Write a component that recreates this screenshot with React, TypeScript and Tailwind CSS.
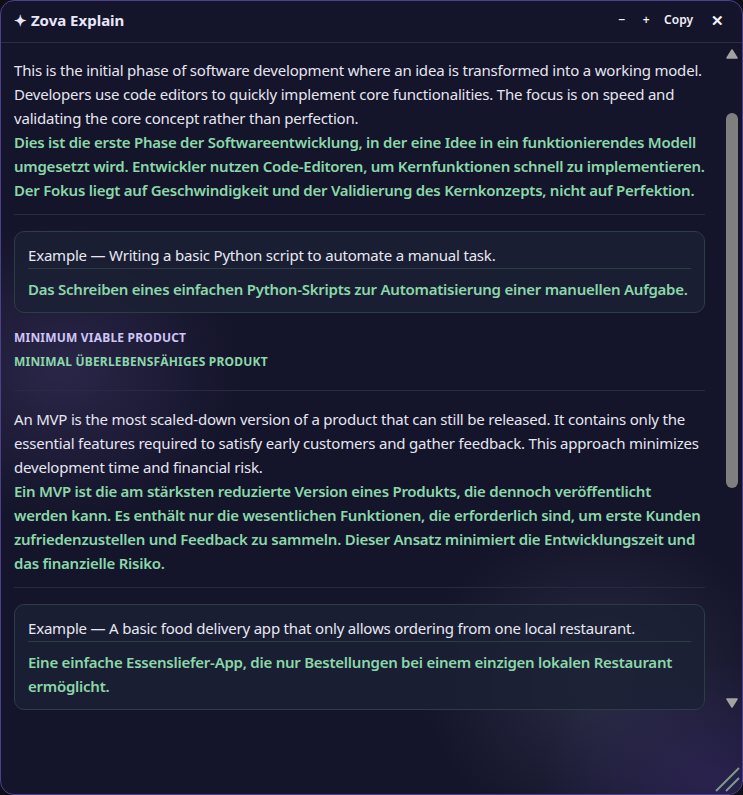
import React from "react";

const font = { fontFamily: '"Segoe UI", "Noto Sans", "Open Sans", sans-serif' };

function Divider({ className = "my-[12px]" }: { className?: string }) {
  return <div className={"h-px bg-[#2a2940] " + className} />;
}

function ExampleCard({ en, de }: { en: string; de: string }) {
  return (
    <div className="rounded-[10px] border border-[#2c3d44] bg-[#1c2134]/80 px-[13px] pt-[11px] pb-[11px]">
      <div className="text-[15px] leading-[24px] tracking-[-0.2px] text-[#e8e8f2] pb-[1px] border-b border-[#2c3d44]">{en}</div>
      <div className="text-[15px] leading-[24px] tracking-[-0.25px] font-semibold text-[#8ad8a9] mt-[8px]">{de}</div>
    </div>
  );
}

export default function App() {
  return (
    <div className="w-[743px] h-[795px] bg-[#0e0e14] overflow-hidden" style={font}>
      <div className="relative w-full h-full rounded-[14px] border border-[#4c3f8e] bg-[#14142a] overflow-hidden flex flex-col">
        {/* glows */}
        <div className="pointer-events-none absolute left-[-120px] top-[220px] w-[360px] h-[300px] rounded-full bg-[radial-gradient(closest-side,rgba(70,60,110,0.45),rgba(20,20,42,0))]" />
        <div className="pointer-events-none absolute left-[420px] top-[520px] w-[360px] h-[320px] rounded-full bg-[radial-gradient(closest-side,rgba(60,64,90,0.55),rgba(20,20,42,0))]" />
        <div className="pointer-events-none absolute left-[540px] top-[660px] w-[340px] h-[240px] rounded-full bg-[radial-gradient(closest-side,rgba(55,42,100,0.6),rgba(20,20,42,0))]" />

        {/* header */}
        <div className="relative h-[42px] shrink-0 flex items-center justify-between pl-[13px] pr-[18px] pb-[3px] border-b border-[#2e2c46]">
          <div className="text-[15px] font-bold text-[#e9e6fa]">✦ Zova Explain</div>
          <div className="flex items-center text-[12px] text-[#f2f2f8] font-semibold">
            <span className="w-[10px] text-center">−</span>
            <span className="w-[10px] text-center ml-[14px]">+</span>
            <span className="ml-[13px]">Copy</span>
            <span className="ml-[18px] text-[15px] font-bold">✕</span>
          </div>
        </div>

        {/* body */}
        <div className="relative flex-1 flex min-h-0">
          <div className="flex-1 pl-[13px] pr-[18px] pt-[15px]">
            <div className="text-[15px] leading-[24px] tracking-[-0.2px] text-[#e6e6f0]">
              This is the initial phase of software development where an idea is transformed into a working model. Developers use code editors to quickly implement core functionalities. The focus is on speed and validating the core concept rather than perfection.
            </div>
            <div className="text-[15px] leading-[24px] tracking-[-0.25px] font-semibold text-[#8ad8a9]">
              Dies ist die erste Phase der Softwareentwicklung, in der eine Idee in ein funktionierendes Modell umgesetzt wird. Entwickler nutzen Code-Editoren, um Kernfunktionen schnell zu implementieren. Der Fokus liegt auf Geschwindigkeit und der Validierung des Kernkonzepts, nicht auf Perfektion.
            </div>
            <Divider />
            <div className="mt-[16px]">
              <ExampleCard
                en="Example — Writing a basic Python script to automate a manual task."
                de="Das Schreiben eines einfachen Python-Skripts zur Automatisierung einer manuellen Aufgabe."
              />
            </div>
            <div className="mt-[13px] text-[12px] leading-[24px] font-bold tracking-[0.2px] text-[#cfc6f6]">MINIMUM VIABLE PRODUCT</div>
            <div className="text-[12px] leading-[24px] font-bold tracking-[0.2px] text-[#8ad8a9]">MINIMAL ÜBERLEBENSFÄHIGES PRODUKT</div>
            <Divider className="mt-[16px] mb-[16px]" />
            <div className="text-[15px] leading-[24px] tracking-[-0.2px] text-[#e6e6f0]">
              An MVP is the most scaled-down version of a product that can still be released. It contains only the essential features required to satisfy early customers and gather feedback. This approach minimizes development time and financial risk.
            </div>
            <div className="text-[15px] leading-[24px] tracking-[-0.25px] font-semibold text-[#8ad8a9]">
              Ein MVP ist die am stärksten reduzierte Version eines Produkts, die dennoch veröffentlicht werden kann. Es enthält nur die wesentlichen Funktionen, die erforderlich sind, um erste Kunden zufriedenzustellen und Feedback zu sammeln. Dieser Ansatz minimiert die Entwicklungszeit und das finanzielle Risiko.
            </div>
            <Divider />
            <div className="mt-[16px]">
              <ExampleCard
                en="Example — A basic food delivery app that only allows ordering from one local restaurant."
                de="Eine einfache Essensliefer-App, die nur Bestellungen bei einem einzigen lokalen Restaurant ermöglicht."
              />
            </div>
          </div>

          {/* scrollbar */}
          <div className="w-[17px] mr-[2px] shrink-0 flex flex-col items-center pt-[6px] pb-[86px]">
            <svg width="12" height="10" viewBox="0 0 12 10" className="shrink-0">
              <path d="M6 1 L11 9 L1 9 Z" fill="#a3a3a3" stroke="#a3a3a3" strokeLinejoin="round" strokeWidth="1.5" />
            </svg>
            <div className="flex-1 w-full flex flex-col items-center">
              <div className="h-[54px]" />
              <div className="w-[12px] h-[375px] rounded-full bg-[#7f7f7f]" />
            </div>
            <svg width="12" height="10" viewBox="0 0 12 10" className="shrink-0">
              <path d="M1 1 L11 1 L6 9 Z" fill="#a3a3a3" stroke="#a3a3a3" strokeLinejoin="round" strokeWidth="1.5" />
            </svg>
          </div>

          {/* resize grip */}
          <svg className="absolute right-[2px] bottom-[2px]" width="28" height="28" viewBox="0 0 28 28">
            <line x1="4" y1="27" x2="27" y2="4" stroke="#7e9a90" strokeWidth="2" />
            <line x1="14" y1="27" x2="27" y2="14" stroke="#7e9a90" strokeWidth="2" />
          </svg>
        </div>
      </div>
    </div>
  );
}
